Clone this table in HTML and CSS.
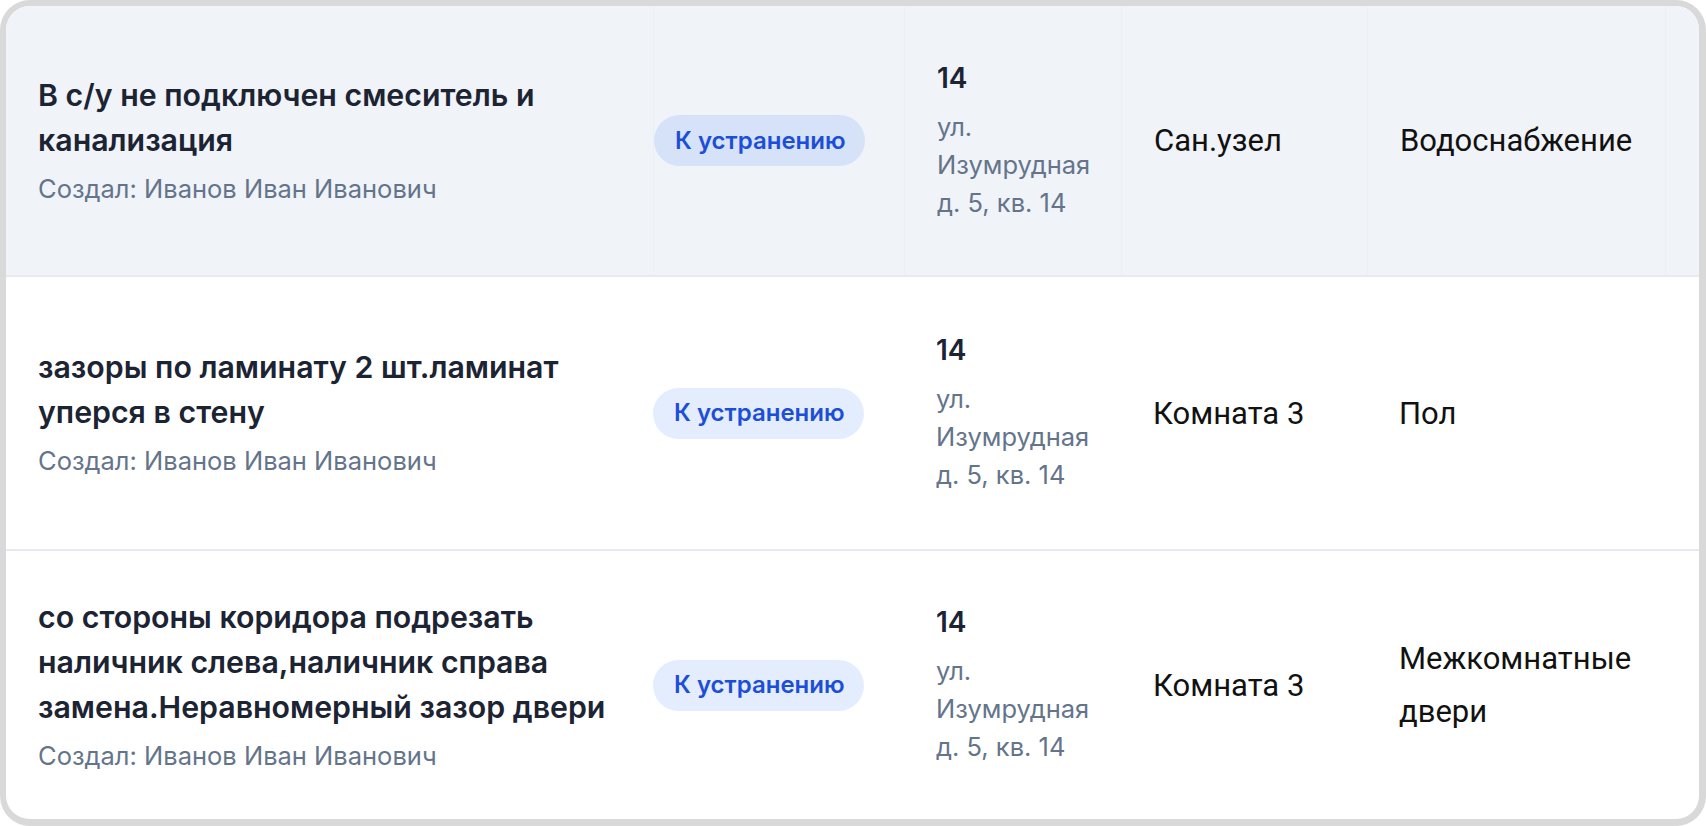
FILE: index.html
```html
<!DOCTYPE html>
<html lang="ru">
<head>
<meta charset="utf-8">
<title>Замечания</title>
<link rel="stylesheet" href="styles.css">
</head>
<body>
<div class="frame">
  <div class="table">
    <div class="row row-active">
      <div class="cell cell-title">
        <div class="title">В с/у не подключен смеситель и канализация</div>
        <div class="author">Создал: Иванов Иван Иванович</div>
      </div>
      <div class="cell cell-status"><span class="pill">К устранению</span></div>
      <div class="cell cell-flat">
        <div class="flat-num">14</div>
        <div class="addr">ул.<br>Изумрудная<br>д. 5, кв. 14</div>
      </div>
      <div class="cell cell-plain">Сан.узел</div>
      <div class="cell cell-plain">Водоснабжение</div>
      <div class="cell cell-end"></div>
    </div>
    <div class="row row-mid">
      <div class="cell cell-title">
        <div class="title">зазоры по ламинату 2 шт.ламинат уперся в стену</div>
        <div class="author">Создал: Иванов Иван Иванович</div>
      </div>
      <div class="cell cell-status"><span class="pill">К устранению</span></div>
      <div class="cell cell-flat">
        <div class="flat-num">14</div>
        <div class="addr">ул.<br>Изумрудная<br>д. 5, кв. 14</div>
      </div>
      <div class="cell cell-plain">Комната 3</div>
      <div class="cell cell-plain">Пол</div>
      <div class="cell cell-end"></div>
    </div>
    <div class="row row-last">
      <div class="cell cell-title">
        <div class="title">со стороны коридора подрезать наличник слева,наличник справа замена.Неравномерный зазор двери</div>
        <div class="author">Создал: Иванов Иван Иванович</div>
      </div>
      <div class="cell cell-status"><span class="pill">К устранению</span></div>
      <div class="cell cell-flat">
        <div class="flat-num">14</div>
        <div class="addr">ул.<br>Изумрудная<br>д. 5, кв. 14</div>
      </div>
      <div class="cell cell-plain">Комната 3</div>
      <div class="cell cell-plain">Межкомнатные двери</div>
      <div class="cell cell-end"></div>
    </div>
  </div>
</div>
</body>
</html>
```

FILE: styles.css
```css
* { box-sizing: border-box; }
html, body { margin: 0; padding: 0; background: #ffffff; }
body { width: 1706px; height: 826px; overflow: hidden; }

.frame {
  width: 1706px;
  height: 826px;
  border: 6px solid #d9d9d9;
  border-right-width: 7px;
  border-bottom-width: 7px;
  border-radius: 30px;
  overflow: hidden;
  background: #ffffff;
}

.table { display: flex; flex-direction: column; }

.row {
  display: grid;
  grid-template-columns: 647px 251px 217px 246px 298px 1fr;
  height: 271px;
  border-bottom: 2px solid #e6e9f1;
}
.row-mid { height: 274px; }
.row-last { border-bottom: none; height: 268px; }
.row-active { background: #f0f3f8; }
.row-active .cell + .cell { border-left: 1px solid #ecf0f6; }

.cell {
  display: flex;
  flex-direction: column;
  justify-content: center;
  padding: 0 32px;
  font-family: "Roboto", "Liberation Sans", sans-serif;
  font-size: 31px;
  line-height: 53px;
  color: #111111;
}
.cell-status { padding-left: 0; padding-right: 0; align-items: flex-start; }
.cell-end { padding: 0; }

.title {
  font-family: "Inter", "Roboto", sans-serif;
  font-weight: 600;
  font-size: 30.3px;
  line-height: 45px;
  color: #1c2434;
}
.author {
  font-family: "Inter", "Roboto", sans-serif;
  font-size: 25.5px;
  line-height: 40px;
  margin-top: 6px;
  color: #64748b;
}

.pill {
  display: inline-flex;
  align-items: center;
  height: 51px;
  padding: 0 19px 0 21px;
  border-radius: 26px;
  background: rgba(59, 130, 246, 0.14);
  font-family: "Inter", "Roboto", sans-serif;
  font-weight: 600;
  font-size: 24px;
  line-height: 1;
  color: #1d4ed8;
}

.flat-num {
  font-family: "Inter", "Roboto", sans-serif;
  font-weight: 600;
  font-size: 28px;
  line-height: 36px;
  color: #1c2434;
}
.addr {
  font-family: "Inter", "Roboto", sans-serif;
  font-size: 25.5px;
  line-height: 38px;
  margin-top: 12px;
  color: #64748b;
}
```
